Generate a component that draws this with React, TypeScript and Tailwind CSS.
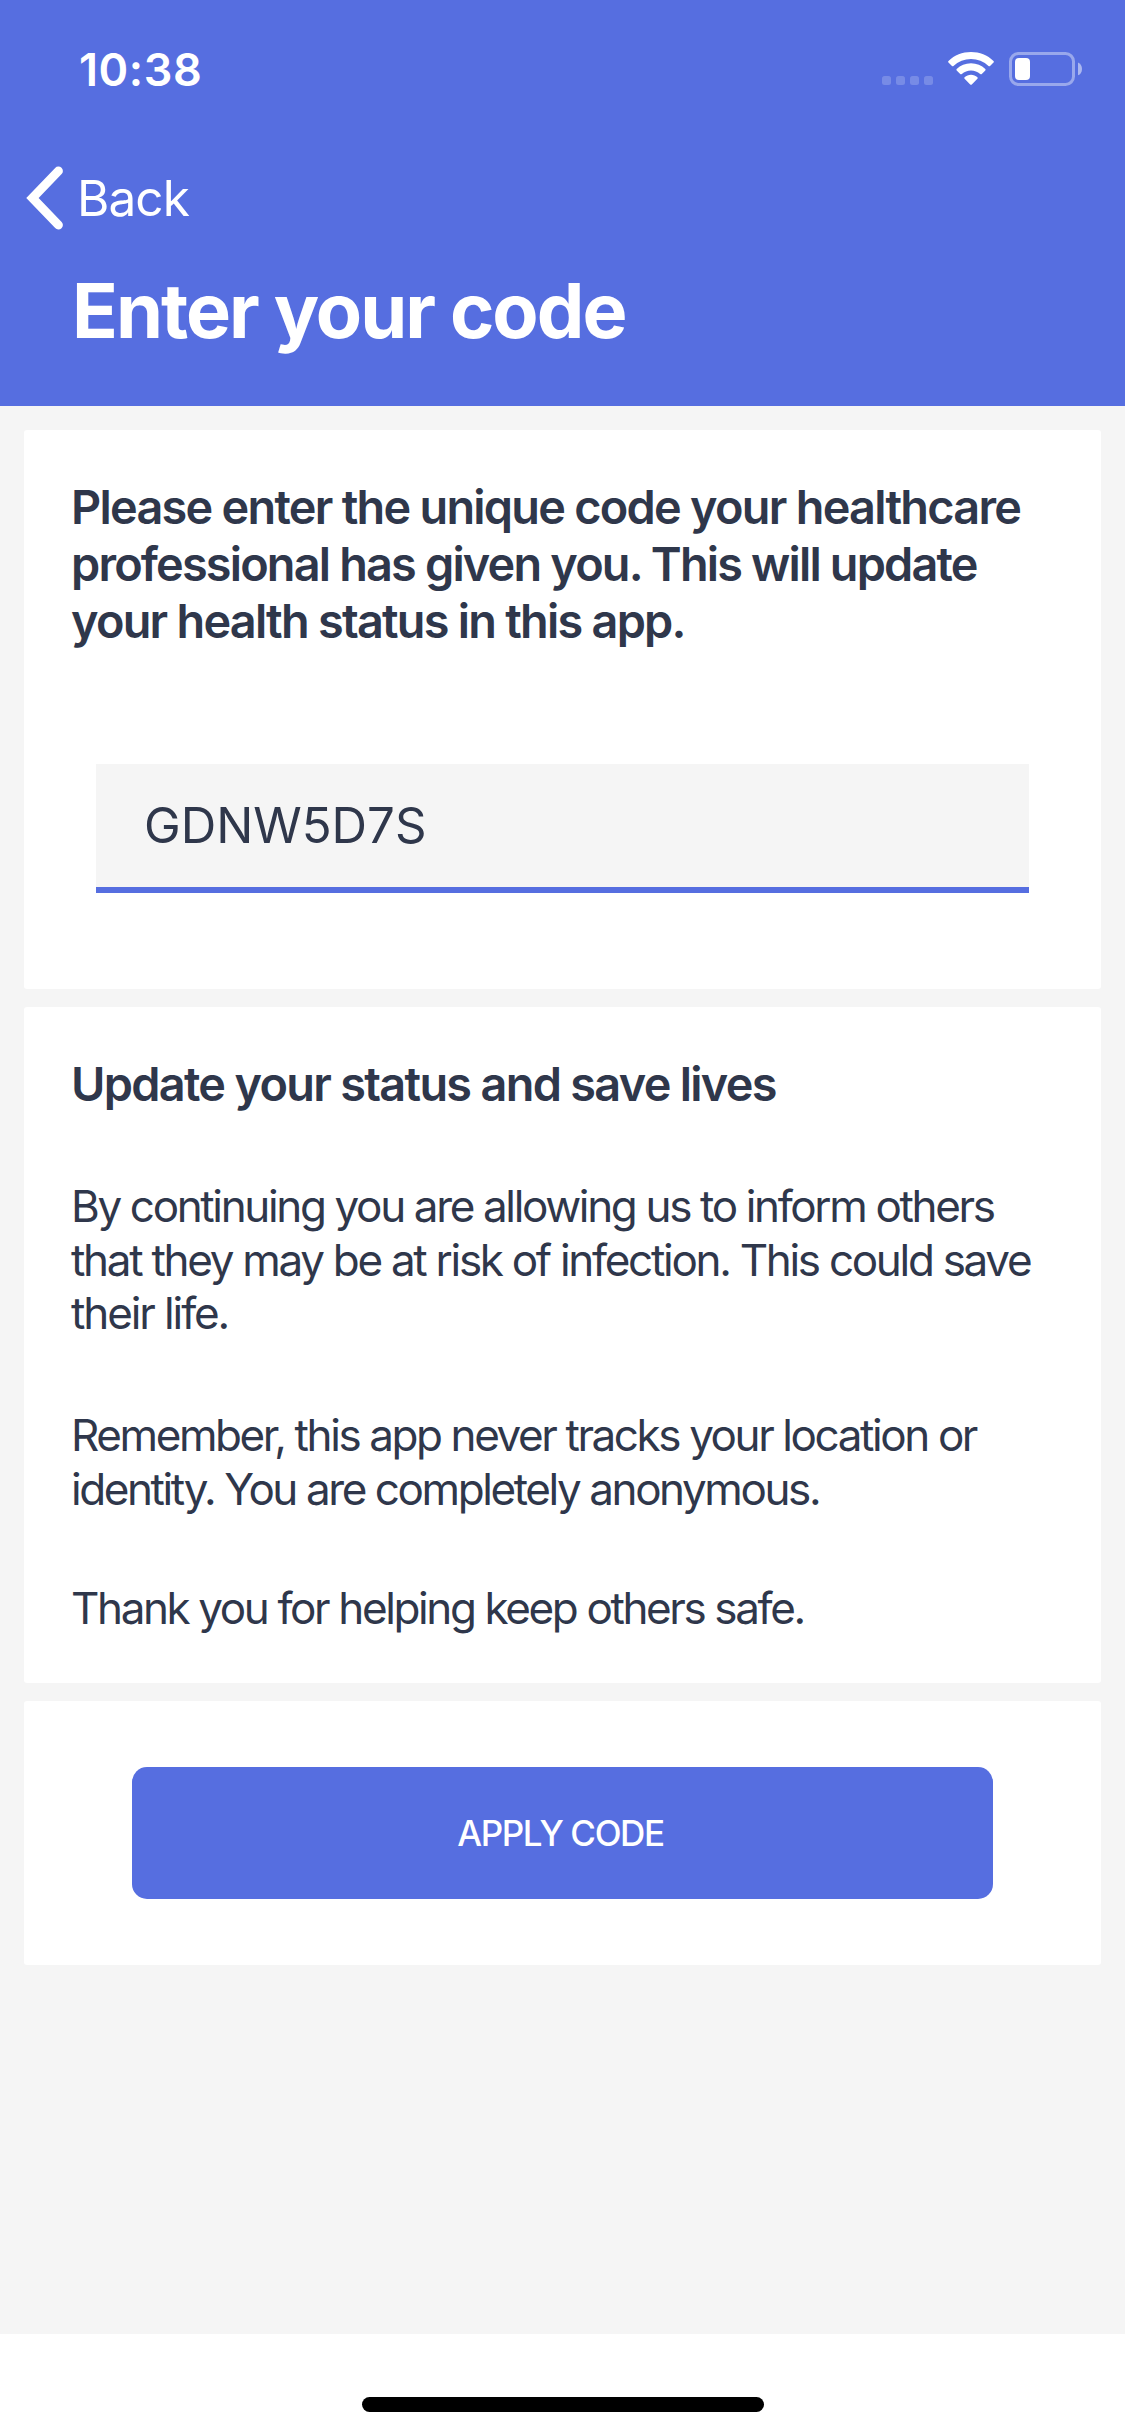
import type { ReactNode } from "react";

function StatusIcons() {
  return (
    <svg
      className="mt-[9px] mr-[43px] block"
      width="200"
      height="34"
      viewBox="0 0 200 34"
      fill="none"
    >
      <g fill="#fff" fillOpacity="0.2">
        <rect x="0" y="24" width="9" height="9" rx="2.5" />
        <rect x="14" y="24" width="9" height="9" rx="2.5" />
        <rect x="28" y="24" width="9" height="9" rx="2.5" />
        <rect x="42" y="24" width="9" height="9" rx="2.5" />
      </g>
      <g fill="#fff">
        <path d="M89 0C97.600 0 105.500 3.200 111.500 8.900Q112.300 9.700 111.500 10.500L108 14Q107.300 14.700 106.500 14A25.500 25.500 0 0 0 71.500 14Q70.700 14.700 70 14L66.500 10.500Q65.700 9.700 66.500 8.900C72.500 3.200 80.400 0 89 0Z" />
        <path d="M89 11.300C94.600 11.300 99.600 13.400 103.300 17Q104 17.800 103.300 18.500L99.800 22Q99 22.700 98.200 22A13.800 13.800 0 0 0 79.800 22Q79 22.700 78.200 22L74.700 18.500Q74 17.800 74.700 17C78.400 13.400 83.400 11.300 89 11.300Z" />
        <path d="M89 22.800C91.400 22.800 93.700 23.700 95.400 25.200Q96.200 26 95.400 26.800L89.800 32.500Q89 33.200 88.200 32.500L82.600 26.800Q81.800 26 82.600 25.200C84.300 23.700 86.600 22.800 89 22.800Z" />
      </g>
      <rect x="128.500" y="1.500" width="63" height="31" rx="8" stroke="#fff" strokeOpacity="0.4" strokeWidth="3" />
      <rect x="133" y="6" width="15" height="22" rx="4" fill="#fff" />
      <path d="M196 10.500C198.500 11.500 200 14 200 17C200 20 198.500 22.500 196 23.300Z" fill="#fff" fillOpacity="0.5" />
    </svg>
  );
}

function Card({ className, children }: { className: string; children: ReactNode }) {
  return <section className={`rounded-[3px] bg-white ${className}`}>{children}</section>;
}

function Line({ className, children }: { className: string; children: ReactNode }) {
  return <span className={`block whitespace-nowrap ${className}`}>{children}</span>;
}

export default function App() {
  return (
    <div className="flex h-[2436px] w-[1125px] flex-col bg-[#f5f5f5] font-['Inter',sans-serif] text-[#2f374b]">
      <header className="h-[406px] shrink-0 bg-[#566ee0] text-white">
        <div className="flex h-[132px] items-start justify-between pt-[43px]">
          <span className="ml-[79px] text-[45px] leading-[54px] font-semibold tracking-[0.58px]">
            10:38
          </span>
          <StatusIcons />
        </div>
        <div className="flex h-[132px] items-center">
          <svg
            className="ml-[24px] block"
            width="42"
            height="66"
            viewBox="0 0 42 66"
            fill="none"
            stroke="#fff"
            strokeWidth="9"
            strokeLinecap="round"
          >
            <path d="M34.400 6L8.500 33L34.400 60" strokeLinejoin="miter" />
          </svg>
          <span className="ml-[11px] text-[49.5px] leading-[60px] tracking-[-0.92px]">Back</span>
        </div>
        <h1 className="ml-[72px] pt-[2px] text-[75.6px] leading-[90px] font-bold tracking-[-2px]">
          Enter your code
        </h1>
      </header>

      <main className="flex flex-1 flex-col gap-[18px] px-6 pt-6">
        <Card className="px-[47px] pt-[49px] pb-24">
          <h2 className="text-[46.8px] leading-[57px] font-semibold">
            <Line className="tracking-[-1.72px]">Please enter the unique code your healthcare</Line>
            <Line className="tracking-[-1.81px]">professional has given you. This will update</Line>
            <Line className="tracking-[-1.74px]">your health status in this app.</Line>
          </h2>
          <div className="mx-[25px] mt-[114px] flex h-[129px] items-center border-b-[6px] border-[#566ee0] bg-[#f5f5f5] pb-[2px] pl-[48px] text-[49.2px] leading-[60px]">
            GDNW5D7S
          </div>
        </Card>

        <Card className="h-[676px] px-[47px] pt-[49px]">
          <h2 className="text-[46.8px] leading-[57px] font-semibold tracking-[-1.68px]">
            Update your status and save lives
          </h2>
          <div className="mt-[67px] flex flex-col text-[44px] leading-[53.5px]">
            <p>
              <Line className="tracking-[-2.35px]">By continuing you are allowing us to inform others</Line>
              <Line className="tracking-[-2.29px]">that they may be at risk of infection. This could save</Line>
              <Line className="tracking-[-2.1px]">their life.</Line>
            </p>
            <p className="mt-[68.5px]">
              <Line className="tracking-[-2.4px]">Remember, this app never tracks your location or</Line>
              <Line className="tracking-[-2.41px]">identity. You are completely anonymous.</Line>
            </p>
            <p className="mt-[66px]">
              <Line className="tracking-[-2.38px]">Thank you for helping keep others safe.</Line>
            </p>
          </div>
        </Card>

        <Card className="px-[108px] py-[66px]">
          <button className="flex h-[132px] w-full items-center justify-center rounded-[15px] bg-[#566ee0] pr-[4px] text-[35px] leading-[42px] font-medium tracking-[-1.4px] text-white">
            APPLY CODE
          </button>
        </Card>
      </main>

      <footer className="flex h-[102px] shrink-0 justify-center bg-white pt-[63px]">
        <div className="h-[15px] w-[402px] rounded-full bg-black" />
      </footer>
    </div>
  );
}
